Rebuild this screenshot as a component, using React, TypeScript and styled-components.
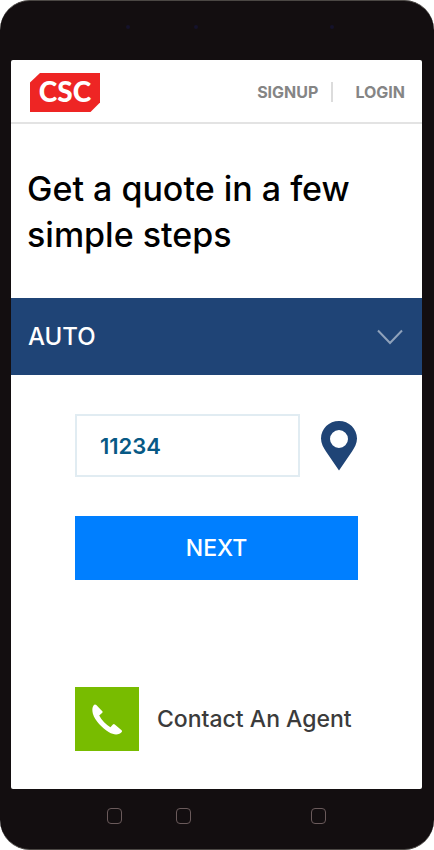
import React, { useState } from 'react';
import styled, { createGlobalStyle } from 'styled-components';

const GlobalStyle = createGlobalStyle`
  *, *::before, *::after { box-sizing: border-box; }
  body { margin: 0; background: #fff; font-family: Inter, 'Liberation Sans', sans-serif; }
  button, input, select { font: inherit; }
`;

const Phone = styled.div`
  min-height: 100vh;
  display: flex;
  flex-direction: column;
  padding: 0 12px 0 11px;
  background: #130e10;
  border: solid #4b4744;
  border-width: 1px 0;
  border-radius: 30px;
`;

const SensorBar = styled.div`
  height: 59px;
  flex: none;
  display: flex;
  justify-content: center;
  padding: 24px 0 0 26px;
`;

const Sensor = styled.span<{ $gap?: number }>`
  width: 4px;
  height: 4px;
  border-radius: 50%;
  background: #15122b;
  margin-left: ${({ $gap = 0 }) => $gap}px;
`;

const Screen = styled.main`
  flex: 1;
  background: #fff;
  border-radius: 2px;
`;

const Header = styled.header`
  height: 64px;
  display: flex;
  align-items: center;
  justify-content: space-between;
  padding: 2px 17px 0 19px;
  border-bottom: 2px solid #e3e3e3;
`;

const Brand = styled.a`
  display: flex;
`;

const Nav = styled.nav`
  display: flex;
  align-items: center;
`;

const NavLink = styled.a`
  color: #858585;
  font-size: 16px;
  font-weight: 700;
  line-height: 20px;
  text-decoration: none;

  & + & {
    margin-left: 13px;
    padding-left: 22px;
    border-left: 2px solid #dcdcdc;
  }
`;

const Title = styled.h1`
  margin: 0;
  padding: 42px 16px 40px;
  color: #000;
  font-size: 34px;
  font-weight: 500;
  line-height: 46px;
`;

const SelectBar = styled.label`
  display: grid;
  align-items: center;
  background: #1f4476;
  color: #8fa2bb;

  & > * { grid-area: 1 / 1; }
  & > svg { justify-self: end; margin-right: 19px; pointer-events: none; }
`;

const Select = styled.select`
  appearance: none;
  width: 100%;
  height: 77px;
  padding: 0 60px 0 17px;
  border: 0;
  border-radius: 0;
  background: transparent;
  color: #fff;
  font-size: 24px;
  font-weight: 500;
`;

const Form = styled.form`
  padding: 39px 64px 0;
`;

const ZipRow = styled.div`
  display: flex;
  align-items: center;
  gap: 21px;
  margin-bottom: 39px;
`;

const ZipInput = styled.input`
  flex: 1;
  min-width: 0;
  height: 63px;
  padding: 0 23px;
  border: 2px solid #e1ecf2;
  border-radius: 0;
  background: #fff;
  color: #075985;
  font-size: 22px;
  font-weight: 600;
`;

const LocateButton = styled.button`
  display: flex;
  padding: 0;
  border: 0;
  background: none;
`;

const NextButton = styled.button`
  width: 100%;
  height: 64px;
  border: 0;
  background: #007fff;
  color: #fff;
  font-size: 23px;
  font-weight: 500;
`;

const Contact = styled.a`
  display: flex;
  align-items: center;
  gap: 18px;
  margin: 107px 60px 38px 64px;
  color: #3b3b3b;
  font-size: 23px;
  font-weight: 500;
  text-decoration: none;
  white-space: nowrap;
`;

const CallTile = styled.span`
  display: flex;
  align-items: center;
  justify-content: center;
  flex: none;
  width: 64px;
  height: 64px;
  background: #78bc00;
`;

const KeyBar = styled.div`
  height: 60px;
  flex: none;
  display: flex;
  justify-content: center;
  padding-top: 19px;
`;

const Key = styled.span<{ $gap?: number }>`
  width: 15px;
  height: 16px;
  margin-left: ${({ $gap = 0 }) => $gap}px;
  border: 1px solid #6a5a5b;
  border-radius: 4px;
`;

const LogoText = styled.text`
  fill: #fff;
  font-family: Lato, sans-serif;
  font-size: 28px;
  font-weight: 900;
`;

const Logo = () => (
  <svg width="70" height="39" viewBox="0 0 70 39" role="img" aria-label="CSC">
    <path d="M10 0H70V29.500L60.500 39H0V9.500Z" fill="#ee2524" />
    <LogoText x="35" y="29" textAnchor="middle">CSC</LogoText>
  </svg>
);

const Chevron = () => (
  <svg width="26" height="16" viewBox="0 0 26 16" fill="none" stroke="currentColor" strokeWidth="2">
    <path d="M1 1.500L13 14L25 1.500" />
  </svg>
);

const Pin = () => (
  <svg width="37" height="50" viewBox="0 0 37 50">
    <path
      fill="#1f4476"
      fillRule="evenodd"
      d="M18 0C8 0 0 7.700 0 17.500C0 22.500 2.500 26.500 5 30.500L18 49.500L31 30.500C33.500 26.500 36 22.500 36 17.500C36 7.700 28 0 18 0ZM18 9A9 9 0 1 1 18 27A9 9 0 1 1 18 9Z"
    />
  </svg>
);

const Handset = () => (
  <svg width="32" height="32" viewBox="0 0 32 32">
    <path
      fill="#fff"
      d="M3.200 1.700Q4.300 1 5.300 2L11.300 8.300Q12 9 11.300 9.700L8.200 12.400C10.600 17 15.200 21.600 19.400 24.200L21.900 21.600Q22.800 20.700 23.800 21.500L30.600 27.300Q31.400 28.100 30.700 28.900C28.600 32 23 32.300 18 29.300C11 25 4 17.800 1.900 10.800C.9 7 1.200 3.500 3.200 1.700Z"
    />
  </svg>
);

export default function App() {
  const [product, setProduct] = useState('AUTO');
  const [zip, setZip] = useState('11234');

  return (
    <>
      <GlobalStyle />
      <Phone>
        <SensorBar aria-hidden="true">
          <Sensor />
          <Sensor $gap={64} />
          <Sensor $gap={132} />
        </SensorBar>
        <Screen>
          <Header>
            <Brand href="#home"><Logo /></Brand>
            <Nav>
              <NavLink href="#signup">SIGNUP</NavLink>
              <NavLink href="#login">LOGIN</NavLink>
            </Nav>
          </Header>
          <Title>Get a quote in a few simple steps</Title>
          <SelectBar>
            <Select aria-label="Insurance type" value={product} onChange={(e) => setProduct(e.target.value)}>
              <option>AUTO</option>
            </Select>
            <Chevron />
          </SelectBar>
          <Form onSubmit={(e) => e.preventDefault()}>
            <ZipRow>
              <ZipInput aria-label="ZIP code" inputMode="numeric" value={zip} onChange={(e) => setZip(e.target.value)} />
              <LocateButton type="button" aria-label="Use my location"><Pin /></LocateButton>
            </ZipRow>
            <NextButton type="submit">NEXT</NextButton>
          </Form>
          <Contact href="#contact">
            <CallTile><Handset /></CallTile>
            Contact An Agent
          </Contact>
        </Screen>
        <KeyBar aria-hidden="true">
          <Key />
          <Key $gap={54} />
          <Key $gap={120} />
        </KeyBar>
      </Phone>
    </>
  );
}
